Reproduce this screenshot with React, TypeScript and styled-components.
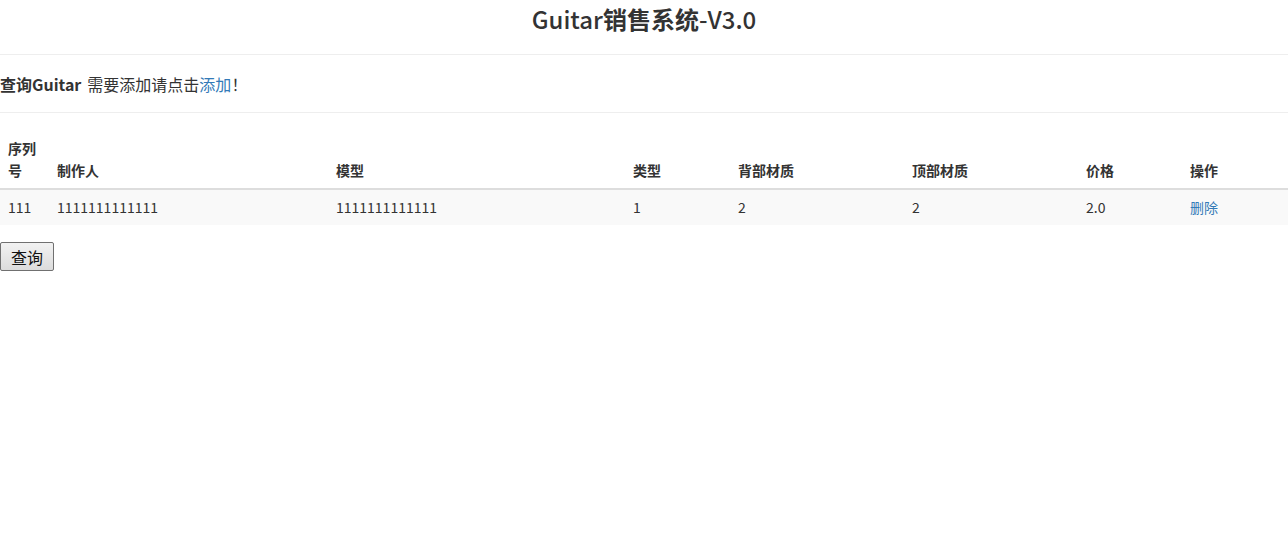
import React from "react";
import styled, { createGlobalStyle } from "styled-components";

const GlobalStyle = createGlobalStyle`
    body {
        margin: 0;
        background: #fff;
        color: #333;
        font-family: "Microsoft YaHei", "Noto Sans CJK SC", "Noto Sans", sans-serif;
        font-size: 14px;
    }
`

const Title = styled.h3`
    margin: 0;
    height: 55px;
    line-height: 37px;
    text-align: center;
    font-size: 24px;
    font-weight: 500;
    border-bottom: 1px solid #eee;
    box-sizing: border-box;

    b {
        font-weight: 700;
    }
`

const Toolbar = styled.div`
    height: 58px;
    box-sizing: border-box;
    display: flex;
    align-items: center;
    font-size: 16px;
    border-bottom: 1px solid #eee;
`

const Label = styled.strong`
    font-weight: 700;
    margin-right: 6px;
`

const Link = styled.a`
    color: #337ab7;
    text-decoration: none;
    cursor: pointer;
`

const Table = styled.table`
    width: 100%;
    margin-top: 18px;
    border-collapse: collapse;
    table-layout: fixed;
`

const Th = styled.th`
    padding: 6px 8px 7px;
    line-height: 22px;
    text-align: left;
    vertical-align: bottom;
    font-weight: 700;
    font-size: 14px;
    border-bottom: 2px solid #ddd;
`

const Row = styled.tr<{ $striped?: boolean }>`
    background: ${p => (p.$striped ? "#f9f9f9" : "#fff")};
`

const Td = styled.td`
    padding: 8px;
    line-height: 19px;
    font-size: 14px;
`

const QueryButton = styled.button`
    margin-top: 17px;
    display: block;
    width: 54px;
    height: 29px;
    padding: 0;
    font-family: "Microsoft YaHei", "Noto Sans CJK SC", sans-serif;
    font-size: 16px;
    color: #111;
    background: linear-gradient(#f2f2f2, #dcdcdc);
    border: 1px solid #707070;
    border-radius: 2px;
    cursor: pointer;
`

const columns = [
    { title: "序列号", width: 49 },
    { title: "制作人", width: 279 },
    { title: "模型", width: 297 },
    { title: "类型", width: 105 },
    { title: "背部材质", width: 174 },
    { title: "顶部材质", width: 174 },
    { title: "价格", width: 104 },
    { title: "操作", width: 106 },
];

const guitars = [
    { serial: "111", builder: "1111111111111", model: "1111111111111", type: "1", back: "2", top: "2", price: "2.0" },
];

export default function App() {
    return (
        <>
            <GlobalStyle />
            <Title>Guitar<b>销售系统</b>-V3.0</Title>
            <Toolbar>
                <Label>查询Guitar</Label>
                需要添加请点击<Link>添加</Link>！
            </Toolbar>
            <Table>
                <colgroup>
                    {columns.map(c => <col key={c.title} style={{ width: c.width }} />)}
                </colgroup>
                <thead>
                    <tr>
                        {columns.map(c => <Th key={c.title}>{c.title}</Th>)}
                    </tr>
                </thead>
                <tbody>
                    {guitars.map((g, i) => (
                        <Row key={g.serial} $striped={i % 2 === 0}>
                            <Td>{g.serial}</Td>
                            <Td>{g.builder}</Td>
                            <Td>{g.model}</Td>
                            <Td>{g.type}</Td>
                            <Td>{g.back}</Td>
                            <Td>{g.top}</Td>
                            <Td>{g.price}</Td>
                            <Td><Link>删除</Link></Td>
                        </Row>
                    ))}
                </tbody>
            </Table>
            <QueryButton>查询</QueryButton>
        </>
    )
};
